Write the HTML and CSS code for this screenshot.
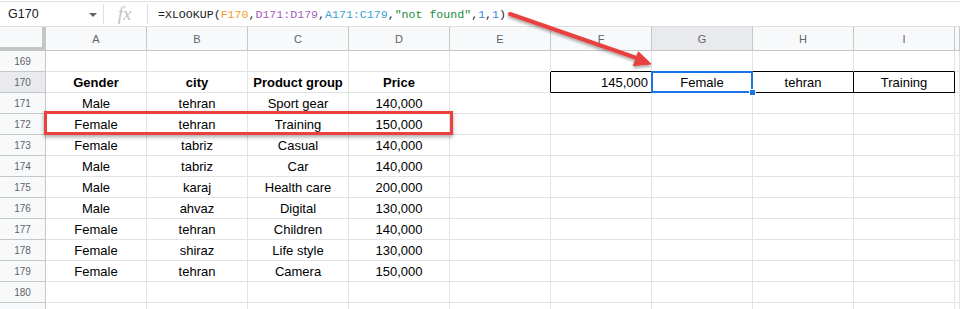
FILE: index.html
```html
<!DOCTYPE html>
<html>
  <head>
    <title>XLOOKUP sheet</title>
    <link rel="stylesheet" href="styles.css">
  </head>
  <body>
    <div class="formula-bar">
      <div class="name-box">G170</div>
      <span class="caret"></span>
      <span class="sep"></span>
      <span class="fx">fx</span>
      <span class="sep"></span>
      <div class="formula">=XLOOKUP(<span class="f-orange">F170</span>,<span class="f-purple">D171:D179</span>,<span class="f-teal">A171:C179</span>,<span class="f-green">"not found"</span>,<span class="f-blue">1</span>,<span class="f-blue">1</span>)</div>
    </div>

    <div class="sheet">
      <div class="row head">
        <div class="corner"></div>
        <div class="ch">A</div><div class="ch">B</div><div class="ch">C</div><div class="ch">D</div><div class="ch">E</div>
        <div class="ch">F</div><div class="ch sel">G</div><div class="ch">H</div><div class="ch">I</div><div class="ch"></div>
      </div>
      <div class="row">
        <div class="rh">169</div>
        <div class="c"></div><div class="c"></div><div class="c"></div><div class="c"></div><div class="c"></div>
        <div class="c bx-top"></div><div class="c bx-top"></div><div class="c bx-top"></div><div class="c bx-top"></div><div class="c"></div>
      </div>
      <div class="row">
        <div class="rh sel">170</div>
        <div class="c b">Gender</div><div class="c b">city</div><div class="c b">Product group</div><div class="c b">Price</div><div class="c bx-left"></div>
        <div class="c bx r">145,000</div>
        <div class="c bx active">Female<span class="selection"><span class="handle"></span></span></div>
        <div class="c bx">tehran</div><div class="c bx">Training</div><div class="c"></div>
      </div>
      <div class="row">
        <div class="rh">171</div>
        <div class="c">Male</div><div class="c">tehran</div><div class="c">Sport gear</div><div class="c">140,000</div>
        <div class="c"></div><div class="c"></div><div class="c"></div><div class="c"></div><div class="c"></div><div class="c"></div>
      </div>
      <div class="row">
        <div class="rh">172</div>
        <div class="c">Female</div><div class="c">tehran</div><div class="c">Training</div><div class="c">150,000</div>
        <div class="c"></div><div class="c"></div><div class="c"></div><div class="c"></div><div class="c"></div><div class="c"></div>
      </div>
      <div class="row">
        <div class="rh">173</div>
        <div class="c">Female</div><div class="c">tabriz</div><div class="c">Casual</div><div class="c">140,000</div>
        <div class="c"></div><div class="c"></div><div class="c"></div><div class="c"></div><div class="c"></div><div class="c"></div>
      </div>
      <div class="row">
        <div class="rh">174</div>
        <div class="c">Male</div><div class="c">tabriz</div><div class="c">Car</div><div class="c">140,000</div>
        <div class="c"></div><div class="c"></div><div class="c"></div><div class="c"></div><div class="c"></div><div class="c"></div>
      </div>
      <div class="row">
        <div class="rh">175</div>
        <div class="c">Male</div><div class="c">karaj</div><div class="c">Health care</div><div class="c">200,000</div>
        <div class="c"></div><div class="c"></div><div class="c"></div><div class="c"></div><div class="c"></div><div class="c"></div>
      </div>
      <div class="row">
        <div class="rh">176</div>
        <div class="c">Male</div><div class="c">ahvaz</div><div class="c">Digital</div><div class="c">130,000</div>
        <div class="c"></div><div class="c"></div><div class="c"></div><div class="c"></div><div class="c"></div><div class="c"></div>
      </div>
      <div class="row">
        <div class="rh">177</div>
        <div class="c">Female</div><div class="c">tehran</div><div class="c">Children</div><div class="c">140,000</div>
        <div class="c"></div><div class="c"></div><div class="c"></div><div class="c"></div><div class="c"></div><div class="c"></div>
      </div>
      <div class="row">
        <div class="rh">178</div>
        <div class="c">Female</div><div class="c">shiraz</div><div class="c">Life style</div><div class="c">130,000</div>
        <div class="c"></div><div class="c"></div><div class="c"></div><div class="c"></div><div class="c"></div><div class="c"></div>
      </div>
      <div class="row">
        <div class="rh">179</div>
        <div class="c">Female</div><div class="c">tehran</div><div class="c">Camera</div><div class="c">150,000</div>
        <div class="c"></div><div class="c"></div><div class="c"></div><div class="c"></div><div class="c"></div><div class="c"></div>
      </div>
      <div class="row">
        <div class="rh">180</div>
        <div class="c"></div><div class="c"></div><div class="c"></div><div class="c"></div><div class="c"></div>
        <div class="c"></div><div class="c"></div><div class="c"></div><div class="c"></div><div class="c"></div>
      </div>
      <div class="row">
        <div class="rh">181</div>
        <div class="c"></div><div class="c"></div><div class="c"></div><div class="c"></div><div class="c"></div>
        <div class="c"></div><div class="c"></div><div class="c"></div><div class="c"></div><div class="c"></div>
      </div>
    </div>

    <!-- annotations drawn over the screenshot -->
    <div class="highlight-box"></div>
    <svg class="arrow" width="960" height="100" viewBox="0 0 960 100">
      <defs>
        <filter id="shadow" x="-10%" y="-30%" width="130%" height="180%">
          <feDropShadow dx="0" dy="2" stdDeviation="1.5" flood-color="#000" flood-opacity="0.35"/>
        </filter>
      </defs>
      <g filter="url(#shadow)" fill="#e8423f" stroke="#e8423f">
        <line x1="510" y1="14" x2="638" y2="58.5" stroke-width="4" stroke-linecap="round"/>
        <polygon points="651,64 633.4,65.6 638.4,51.8" stroke-width="1" stroke-linejoin="round"/>
      </g>
    </svg>
  </body>
</html>
```

FILE: styles.css
```css
* {
  box-sizing: border-box;
}

body {
  margin: 0;
  font-family: "Liberation Sans", Arial, sans-serif;
  background: #fff;
  overflow: hidden;
  position: relative;
  height: 309px;
}

/* formula bar */
.formula-bar {
  margin-top: 1px;
  height: 26px;
  border-top: 1px solid #e0e0e0;
  border-bottom: 1px solid #e0e0e0;
  display: flex;
  align-items: center;
}

.name-box {
  width: 89px;
  padding-left: 8px;
  font-size: 12.5px;
  color: #202124;
}

.caret {
  width: 0;
  height: 0;
  border-left: 4px solid transparent;
  border-right: 4px solid transparent;
  border-top: 4px solid #5f6368;
  margin-top: 2px;
  margin-right: 6px;
}

.sep {
  width: 1px;
  height: 20px;
  background: #e0e0e0;
}

.fx {
  width: 43px;
  text-align: center;
  font-family: "Liberation Serif", serif;
  font-style: italic;
  font-size: 19px;
  color: #c4c4c4;
  padding-right: 2px;
}

.formula {
  padding-left: 10px;
  font-family: "Liberation Mono", monospace;
  font-size: 11.6px;
  color: #202124;
}

.f-orange { color: #f29b1c; }
.f-purple { color: #a35cc0; }
.f-teal { color: #3ba4d3; }
.f-green { color: #198a3b; }
.f-blue { color: #3d82e0; }

/* grid */
.row {
  display: grid;
  grid-template-columns: 46px repeat(9, 101px) 1fr;
  height: 21px;
}

.row.head {
  height: 24px;
}

.corner {
  background: #f8f9fa;
  border-right: 4px solid #c4c7c5;
  border-bottom: 4px solid #c4c7c5;
}

.ch {
  background: #f8f9fa;
  border-right: 1px solid #c4c7c5;
  border-bottom: 1px solid #c4c7c5;
  color: #5f6368;
  font-size: 11px;
  display: flex;
  align-items: center;
  justify-content: center;
}

.rh {
  background: #f8f9fa;
  border-right: 1px solid #c4c7c5;
  border-bottom: 1px solid #c4c7c5;
  color: #5f6368;
  font-size: 10px;
  display: flex;
  align-items: center;
  justify-content: center;
}

.ch.sel, .rh.sel {
  background: #e8eaed;
}

.c {
  border-right: 1px solid #e2e3e3;
  border-bottom: 1px solid #e2e3e3;
  font-size: 13px;
  color: #000;
  display: flex;
  align-items: center;
  justify-content: center;
  white-space: nowrap;
}

.c.b {
  font-weight: bold;
}

.c.r {
  justify-content: flex-end;
  padding-right: 3px;
}

.c.bx-top {
  border-bottom-color: #000;
}

.c.bx-left {
  border-right-color: #000;
}

.c.bx {
  border-right-color: #000;
  border-bottom-color: #000;
}

.c.active {
  position: relative;
}

.selection {
  position: absolute;
  left: -1px;
  top: -1px;
  width: 102px;
  height: 22px;
  border: 2px solid #1a73e8;
}

.handle {
  position: absolute;
  right: -5px;
  bottom: -5px;
  width: 7px;
  height: 7px;
  background: #1a73e8;
  border: 1px solid #fff;
}

/* annotations */
.highlight-box {
  position: absolute;
  left: 44px;
  top: 111px;
  width: 409px;
  height: 24px;
  border: 3px solid #ec4040;
  box-shadow: 0 2px 4px rgba(0, 0, 0, 0.35);
}

.arrow {
  position: absolute;
  left: 0;
  top: 0;
  pointer-events: none;
}
```
